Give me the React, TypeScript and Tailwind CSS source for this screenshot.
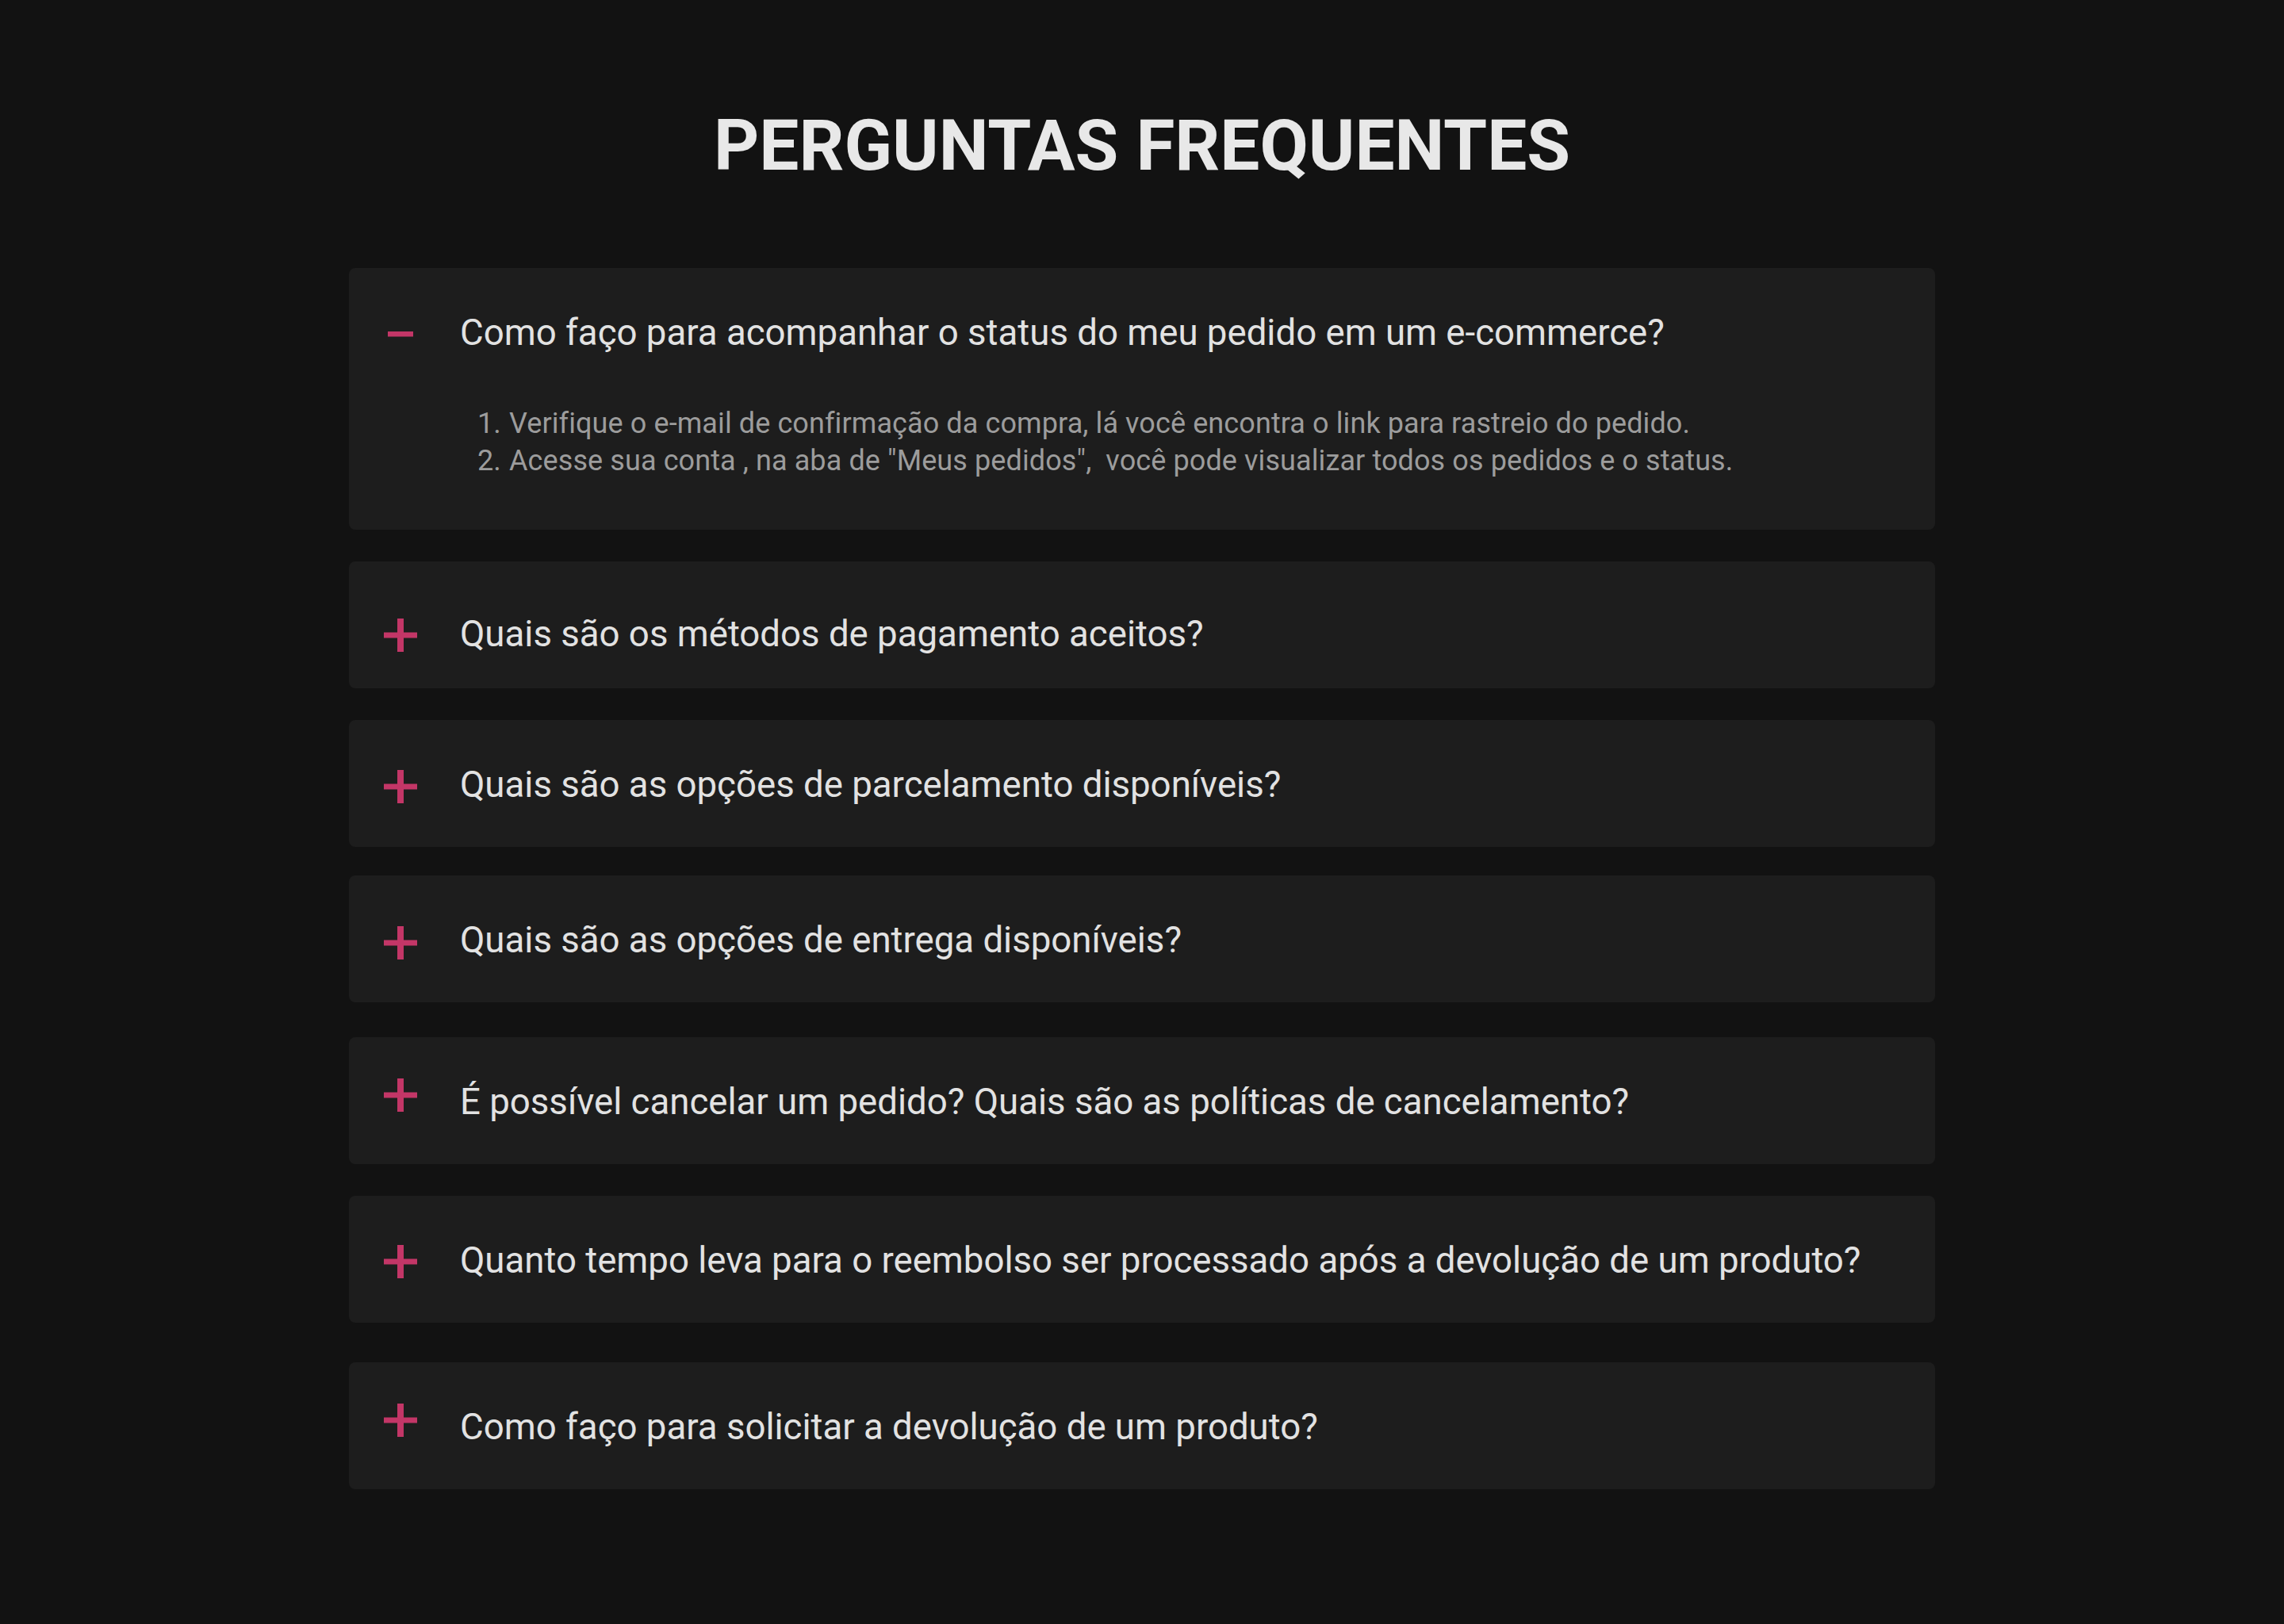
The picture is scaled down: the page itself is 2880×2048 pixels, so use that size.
import React from "react";

type Item = {
  q: string;
  wrap: string;
  row: string;
  icon: string;
};

const items: Item[] = [
  { q: "Quais são os métodos de pagamento aceitos?", wrap: "mt-[40px]", row: "pt-[24px]", icon: "translate-y-[1px]" },
  { q: "Quais são as opções de parcelamento disponíveis?", wrap: "mt-[40px]", row: "pt-[4px]", icon: "translate-y-[2px]" },
  { q: "Quais são as opções de entrega disponíveis?", wrap: "mt-[36px]", row: "pt-[4px]", icon: "translate-y-[3px]" },
  { q: "É possível cancelar um pedido? Quais são as políticas de cancelamento?", wrap: "mt-[44px]", row: "pt-[4px]", icon: "-translate-y-[9px]" },
  { q: "Quanto tempo leva para o reembolso ser processado após a devolução de um produto?", wrap: "mt-[40px]", row: "pt-[4px]", icon: "translate-y-[1px]" },
  { q: "Como faço para solicitar a devolução de um produto?", wrap: "mt-[50px]", row: "pt-[4px]", icon: "-translate-y-[9px]" },
];

function Plus() {
  return (
    <svg width="42" height="42" viewBox="0 0 42 42" className="block">
      <rect x="17" y="0" width="8" height="42" fill="#c33667" />
      <rect x="0" y="17.5" width="42" height="7" fill="#c33667" />
    </svg>
  );
}

function Minus() {
  return (
    <svg width="42" height="42" viewBox="0 0 42 42" className="block">
      <rect x="5" y="18" width="32" height="6.5" fill="#c33667" />
    </svg>
  );
}

export default function App() {
  return (
    <div className="min-h-screen w-full bg-[#121212] font-[Roboto,sans-serif]">
      <div className="mx-auto flex w-[2000px] flex-col pb-[170px] pt-[139px]">
        <h1 className="text-center text-[89px] font-bold leading-none text-[#e8e8e8]">
          PERGUNTAS FREQUENTES
        </h1>

        <div className="mt-[110px] flex flex-col">
          <div className="rounded-lg bg-[#1d1d1d] pb-[63px]">
            <div className="flex h-[160px] items-center px-[44px] pt-[4px]">
              <div className="flex h-[42px] w-[42px] shrink-0 translate-y-[1px] items-center justify-center">
                <Minus />
              </div>
              <span className="ml-[54px] text-[45.6px] leading-[1.2] text-[#e2e2e2]">
                Como faço para acompanhar o status do meu pedido em um e-commerce?
              </span>
            </div>
            <ol className="mt-[13px] flex list-none flex-col pl-[162px] text-[36px] leading-[47px] tracking-[0.1px] text-[#9c9c9c]">
              <li className="flex">
                <span className="w-[40px] shrink-0">1.</span>
                <span>Verifique o e-mail de confirmação da compra, lá você encontra o link para rastreio do pedido.</span>
              </li>
              <li className="flex">
                <span className="w-[40px] shrink-0">2.</span>
                <span>Acesse sua conta , na aba de "Meus pedidos",&nbsp; você pode visualizar todos os pedidos e o status.</span>
              </li>
            </ol>
          </div>

          {items.map((it) => (
            <div key={it.q} className={`rounded-lg bg-[#1d1d1d] ${it.wrap}`}>
              <div className={`flex h-[160px] items-center px-[44px] ${it.row}`}>
                <div className={`flex h-[42px] w-[42px] shrink-0 items-center justify-center ${it.icon}`}>
                  <Plus />
                </div>
                <span className="ml-[54px] text-[45.6px] leading-[1.2] text-[#e2e2e2]">{it.q}</span>
              </div>
            </div>
          ))}
        </div>
      </div>
    </div>
  );
}
